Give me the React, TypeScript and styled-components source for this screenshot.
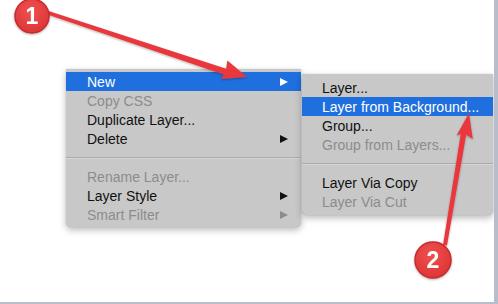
import React from 'react';
import styled, { createGlobalStyle } from 'styled-components';

const GlobalStyle = createGlobalStyle`
  body {
    margin: 0;
    background: #ffffff;
    font-family: "Liberation Sans", Arial, sans-serif;
  }
`;

const mainItems = [
  { label: 'New', active: true, sub: true },
  { label: 'Copy CSS', disabled: true },
  { label: 'Duplicate Layer...' },
  { label: 'Delete', sub: true },
  { separator: true },
  { label: 'Rename Layer...', disabled: true },
  { label: 'Layer Style', sub: true },
  { label: 'Smart Filter', disabled: true, sub: true },
];

const subItems = [
  { label: 'Layer...' },
  { label: 'Layer from Background...', active: true },
  { label: 'Group...' },
  { label: 'Group from Layers...', disabled: true },
  { separator: true },
  { label: 'Layer Via Copy' },
  { label: 'Layer Via Cut', disabled: true },
];

type Item = { label?: string; active?: boolean; disabled?: boolean; sub?: boolean; separator?: boolean };

const MenuList = ({ items, width, inset, pad }: { items: Item[]; width: number; inset: number; pad: number }) => (
  <Menu $width={width} $pad={pad}>
    {items.map((it, i) =>
      it.separator ? (
        <Separator key={i} />
      ) : (
        <MenuItem key={i} $active={it.active} $disabled={it.disabled} $inset={inset}>
          {it.label}
          {it.sub && <SubArrow $active={it.active} $disabled={it.disabled} />}
        </MenuItem>
      )
    )}
  </Menu>
);

const Callout = ({ cx, cy, r, n }: { cx: number; cy: number; r: number; n: string }) => (
  <g filter="url(#soft)">
    <circle cx={cx} cy={cy} r={r} fill="url(#badge)" stroke="#c72a2e" strokeWidth="1.5" />
    <text
      x={cx}
      y={cy + 8}
      textAnchor="middle"
      fontFamily="Liberation Sans, Arial, sans-serif"
      fontWeight="bold"
      fontSize="23"
      fill="#ffffff"
    >
      {n}
    </text>
  </g>
);

const App = () => {
  return (
    <>
      <GlobalStyle />
      <Frame>
        <Stage>
          <MenuList items={mainItems} width={235} inset={21} pad={3} />
          <SubWrap>
            <MenuList items={subItems} width={191} inset={20} pad={4} />
          </SubWrap>
        </Stage>
        <EdgeTick />
        <Overlay width="498" height="304" viewBox="0 0 498 304">
          <defs>
            <radialGradient id="badge" cx="45%" cy="35%" r="70%">
              <stop offset="0%" stopColor="#f0514f" />
              <stop offset="100%" stopColor="#dc3336" />
            </radialGradient>
            <filter id="soft" x="-20%" y="-20%" width="140%" height="140%">
              <feDropShadow dx="0" dy="1" stdDeviation="1" floodColor="#000" floodOpacity="0.3" />
            </filter>
          </defs>
          <g filter="url(#soft)" fill="#e8393d">
            {/* arrow 1 */}
            <polygon points="47,10.6 47.4,14.4 225.6,75.2 227,69" />
            <polygon points="247,77 221.4,79 226,70 227.4,60.6" />
            {/* arrow 2 */}
            <polygon points="443,245 447,245.6 466.4,133.2 461,132.4" />
            <polygon points="469,113 472.8,139 463.6,133 456.6,135.6" />
          </g>
          <Callout cx={32} cy={16} r={17} n="1" />
          <Callout cx={433} cy={260} r={18} n="2" />
        </Overlay>
      </Frame>
    </>
  );
};

const Frame = styled.div`
  position: relative;
  width: 498px;
  height: 304px;
  box-sizing: border-box;
  border-right: 4px solid #b8bdcb;
  border-bottom: 2px solid #b7bdca;
  overflow: hidden;
`;

const Stage = styled.div`
  display: flex;
  align-items: flex-start;
  gap: 1px;
  padding: 69px 0 0 66px;
`;

const SubWrap = styled.div`
  padding-top: 5px;
`;

const Menu = styled.div<{ $width: number; $pad: number }>`
  width: ${(p) => p.$width}px;
  padding: ${(p) => p.$pad}px 0;
  background: #c8c8c8;
  border-radius: 0 0 5px 5px;
  box-shadow: 0 3px 7px rgba(0, 0, 0, 0.28), 0 0 1px rgba(0, 0, 0, 0.25);
`;

const MenuItem = styled.div<{ $active?: boolean; $disabled?: boolean; $inset: number }>`
  display: flex;
  align-items: center;
  height: 19px;
  padding: 0 13px 0 ${(p) => p.$inset}px;
  font-size: 14px;
  white-space: nowrap;
  background: ${(p) => (p.$active ? '#1f6fde' : 'transparent')};
  color: ${(p) => (p.$active ? '#ffffff' : p.$disabled ? '#8c8c8c' : '#111111')};
`;

const SubArrow = styled.span<{ $active?: boolean; $disabled?: boolean }>`
  margin-left: auto;
  width: 0;
  height: 0;
  border-top: 4.5px solid transparent;
  border-bottom: 4.5px solid transparent;
  border-left: 8px solid ${(p) => (p.$active ? '#ffffff' : p.$disabled ? '#8c8c8c' : '#111111')};
`;

const Separator = styled.div`
  height: 19px;
  display: flex;
  flex-direction: column;
  justify-content: center;

  &::before {
    content: '';
    height: 1px;
    background: #aaaaaa;
  }
  &::after {
    content: '';
    height: 1px;
    background: #d6d6d6;
  }
`;

const EdgeTick = styled.span`
  position: absolute;
  right: -4px;
  top: 147px;
  width: 3px;
  height: 4px;
  border: 1px solid #555;
  border-right: none;
  background: #ffffff;
`;

const Overlay = styled.svg`
  position: absolute;
  left: 0;
  top: 0;
  pointer-events: none;
  overflow: visible;
`;

export default App;
